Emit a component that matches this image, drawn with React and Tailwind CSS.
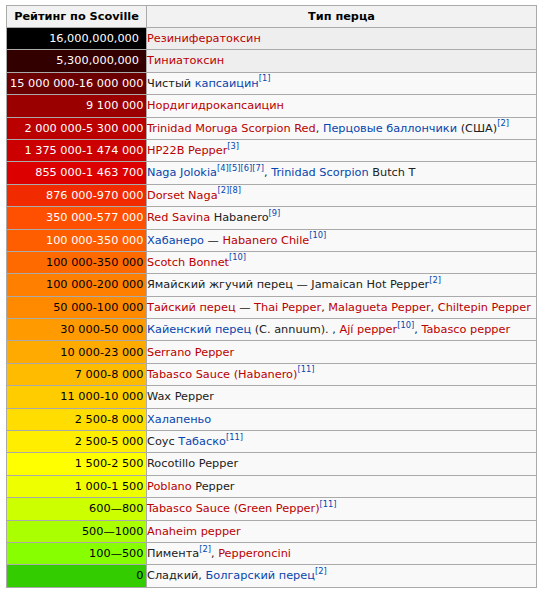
const R = "text-[#ba0000]";
const B = "text-[#0645ad]";
const K = "text-[#202122]";

function Ref({ n }) {
  return (
    <sup className="relative top-[-5.5px] text-[8.3px] leading-none align-baseline text-[#0645ad]">
      {n}
    </sup>
  );
}

const rows = [
  { v: "16,000,000,000", bg: "bg-[#000000]", w: true, pad: true, gray: true, c: [[R, "Резинифератоксин"]] },
  { v: "5,300,000,000", bg: "bg-[#330000]", w: true, pad: true, gray: true, c: [[R, "Тиниатоксин"]] },
  { v: "15 000 000-16 000 000", bg: "bg-[#6a0000]", w: true, c: [[K, "Чистый "], [B, "капсаицин"], ["ref", "[1]"]] },
  { v: "9 100 000", bg: "bg-[#9a0000]", w: true, c: [[R, "Нордигидрокапсаицин"]] },
  {
    v: "2 000 000-5 300 000", bg: "bg-[#bb0000]", w: true,
    c: [[R, "Trinidad Moruga Scorpion Red"], [K, ", "], [B, "Перцовые баллончики"], [K, " (США)"], ["ref", "[2]"]],
  },
  { v: "1 375 000-1 474 000", bg: "bg-[#cc0000]", w: true, c: [[R, "HP22B Pepper"], ["ref", "[3]"]] },
  {
    v: "855 000-1 463 700", bg: "bg-[#dd0000]", w: true,
    c: [[B, "Naga Jolokia"], ["ref", "[4][5][6][7]"], [K, ", "], [B, "Trinidad Scorpion"], [K, " Butch T"]],
  },
  { v: "876 000-970 000", bg: "bg-[#f22a00]", w: true, c: [[R, "Dorset Naga"], ["ref", "[2][8]"]] },
  { v: "350 000-577 000", bg: "bg-[#ff4f00]", w: true, c: [[R, "Red Savina"], [K, " Habanero"], ["ref", "[9]"]] },
  { v: "100 000-350 000", bg: "bg-[#ff5e00]", w: true, c: [[B, "Хабанеро"], [K, " — "], [R, "Habanero Chile"], ["ref", "[10]"]] },
  { v: "100 000-350 000", bg: "bg-[#ff6a00]", c: [[R, "Scotch Bonnet"], ["ref", "[10]"]] },
  { v: "100 000-200 000", bg: "bg-[#ff7f00]", c: [[K, "Ямайский жгучий перец — Jamaican Hot Pepper"], ["ref", "[2]"]] },
  {
    v: "50 000-100 000", bg: "bg-[#ff8a00]",
    c: [[R, "Тайский перец"], [K, " — "], [R, "Thai Pepper"], [K, ", "], [R, "Malagueta Pepper"], [K, ", "], [R, "Chiltepin Pepper"]],
  },
  {
    v: "30 000-50 000", bg: "bg-[#ff9a00]",
    c: [[B, "Кайенский перец"], [K, " (C. annuum). , "], [R, "Ají pepper"], ["ref", "[10]"], [K, ", "], [R, "Tabasco pepper"]],
  },
  { v: "10 000-23 000", bg: "bg-[#ffaa00]", c: [[R, "Serrano Pepper"]] },
  { v: "7 000-8 000", bg: "bg-[#ffbb00]", c: [[R, "Tabasco Sauce (Habanero)"], ["ref", "[11]"]] },
  { v: "11 000-10 000", bg: "bg-[#ffcc00]", c: [[K, "Wax Pepper"]] },
  { v: "2 500-8 000", bg: "bg-[#ffdd00]", c: [[B, "Халапеньо"]] },
  { v: "2 500-5 000", bg: "bg-[#ffee00]", c: [[K, "Соус "], [B, "Табаско"], ["ref", "[11]"]] },
  { v: "1 500-2 500", bg: "bg-[#ffff00]", c: [[K, "Rocotillo Pepper"]] },
  { v: "1 000-1 500", bg: "bg-[#eeff00]", c: [[R, "Poblano"], [K, " Pepper"]] },
  { v: "600—800", bg: "bg-[#ccff00]", c: [[R, "Tabasco Sauce (Green Pepper)"], ["ref", "[11]"]] },
  { v: "500—1000", bg: "bg-[#aaff00]", c: [[R, "Anaheim pepper"]] },
  { v: "100—500", bg: "bg-[#88ff00]", c: [[K, "Пимента"], ["ref", "[2]"], [K, ", "], [R, "Pepperoncini"]] },
  { v: "0", bg: "bg-[#33cc00]", c: [[K, "Сладкий, "], [B, "Болгарский перец"], ["ref", "[2]"]] },
];

export default function App() {
  return (
    <div
      className="min-h-screen bg-white pt-[5px] pl-[6px] text-[11.3px] leading-none"
      style={{ fontFamily: '"DejaVu Sans", sans-serif' }}
    >
      <div className="w-[531px] border-l border-t border-[#aaaaaa]">
        <div className="flex h-[22px] font-bold text-black">
          <div className="flex w-[140px] items-center justify-center border-r border-b border-[#aaaaaa] bg-[#f2f2f2]">
            Рейтинг по Scoville
          </div>
          <div className="flex w-[390px] items-center justify-center border-r border-b border-[#aaaaaa] bg-[#f2f2f2]">
            Тип перца
          </div>
        </div>
        {rows.map((r, i) => (
          <div key={i} className="flex h-[22.4px]">
            <div
              className={`flex w-[140px] items-center justify-end border-r border-b border-[#aaaaaa] whitespace-pre ${r.bg} ${
                r.w ? "text-white" : "text-black"
              } ${r.pad ? "pr-[7px]" : "pr-[2.5px]"}`}
            >
              {r.v}
            </div>
            <div
              className={`flex w-[390px] items-center whitespace-pre border-r border-b border-[#aaaaaa] ${
                r.gray ? "bg-[#eeeeee]" : "bg-[#f9f9f9]"
              }`}
            >
              <span>
                {r.c.map(([cls, t], j) =>
                  cls === "ref" ? <Ref key={j} n={t} /> : (
                    <span key={j} className={cls}>
                      {t}
                    </span>
                  )
                )}
              </span>
            </div>
          </div>
        ))}
      </div>
    </div>
  );
}
